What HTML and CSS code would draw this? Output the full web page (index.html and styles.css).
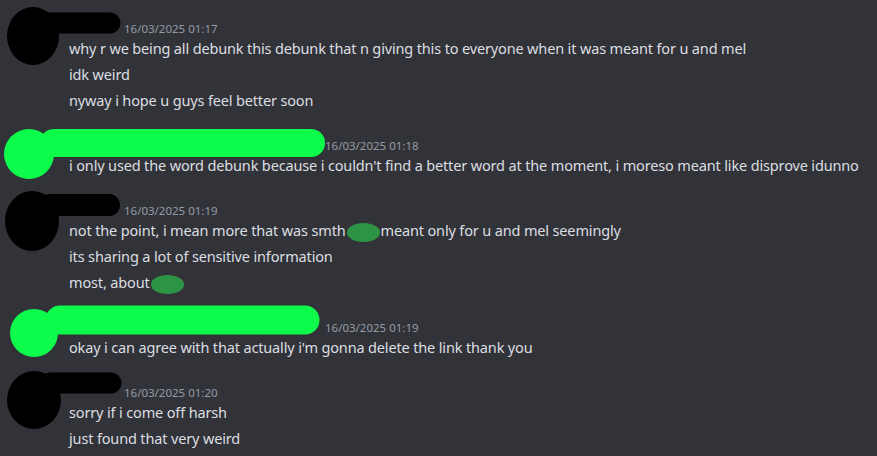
FILE: index.html
```html
<!DOCTYPE html>
<html lang="en">
<head>
    <meta charset="UTF-8">
    <title>Chat</title>
    <link rel="stylesheet" href="styles.css">
</head>
<body>
    <div class="chat">

        <div class="group">
            <svg class="redact" width="877" height="90">
                <ellipse cx="33" cy="35" rx="26" ry="29" fill="#000"/>
                <line x1="45" y1="22" x2="110" y2="22" stroke="#000" stroke-width="21" stroke-linecap="round"/>
            </svg>
            <div class="head"><span class="name short"></span><span class="time">16/03/2025 01:17</span></div>
            <div class="line">why r we being all debunk this debunk that n giving this to everyone when it was meant for u and mel</div>
            <div class="line">idk weird</div>
            <div class="line">nyway i hope u guys feel better soon</div>
        </div>

        <div class="group">
            <svg class="redact" width="877" height="90">
                <circle cx="29" cy="36" r="25" fill="#0dfc4c"/>
                <line x1="54" y1="25" x2="311" y2="25" stroke="#0dfc4c" stroke-width="28" stroke-linecap="round"/>
            </svg>
            <div class="head"><span class="name long"></span><span class="time">16/03/2025 01:18</span></div>
            <div class="line">i only used the word debunk because i couldn't find a better word at the moment, i moreso meant like disprove idunno</div>
        </div>

        <div class="group">
            <svg class="redact" width="877" height="90">
                <ellipse cx="32" cy="38" rx="27" ry="30" fill="#000"/>
                <line x1="50" y1="22" x2="109" y2="22" stroke="#000" stroke-width="22" stroke-linecap="round"/>
            </svg>
            <div class="head"><span class="name short"></span><span class="time">16/03/2025 01:19</span></div>
            <div class="line">not the point, i mean more that was smth<span class="blot"></span>meant only for u and mel seemingly</div>
            <div class="line">its sharing a lot of sensitive information</div>
            <div class="line">most, about<span class="blot"></span></div>
        </div>

        <div class="group">
            <svg class="redact" width="877" height="90">
                <circle cx="34" cy="33" r="24" fill="#0dfc4c"/>
                <line x1="60" y1="20" x2="305" y2="20" stroke="#0dfc4c" stroke-width="29" stroke-linecap="round"/>
            </svg>
            <div class="head"><span class="name long"></span><span class="time">16/03/2025 01:19</span></div>
            <div class="line">okay i can agree with that actually i'm gonna delete the link thank you</div>
        </div>

        <div class="group">
            <svg class="redact" width="877" height="90">
                <ellipse cx="34" cy="35" rx="27" ry="29" fill="#000"/>
                <line x1="50" y1="18" x2="111" y2="18" stroke="#000" stroke-width="21" stroke-linecap="round"/>
            </svg>
            <div class="head"><span class="name short"></span><span class="time">16/03/2025 01:20</span></div>
            <div class="line">sorry if i come off harsh</div>
            <div class="line">just found that very weird</div>
        </div>

    </div>
</body>
</html>
```

FILE: styles.css
```css
html, body { margin: 0; height: 100%; }
body { background-color: #323339; color: #dbdee1; font-family: 'Noto Sans', 'Open Sans', sans-serif; font-size: 14.5px; overflow: hidden; }
.chat { display: flex; flex-direction: column; gap: 25px; padding-top: 21px; }
.group { position: relative; padding-left: 69px; }
.redact { position: absolute; left: 0; top: -20px; }
.head { display: flex; align-items: center; height: 14px; }
.name { display: inline-block; height: 1px; }
.name.short { width: 55px; }
.name.long { width: 256px; }
.time { font-size: 11.5px; color: #949ba4; }
.line { line-height: 26px; white-space: nowrap; letter-spacing: -0.15px; }
.blot { display: inline-block; width: 33px; height: 19px; margin: 0 1px 0 1px; background-color: #2e9445; border-radius: 50%; vertical-align: middle; }
```
